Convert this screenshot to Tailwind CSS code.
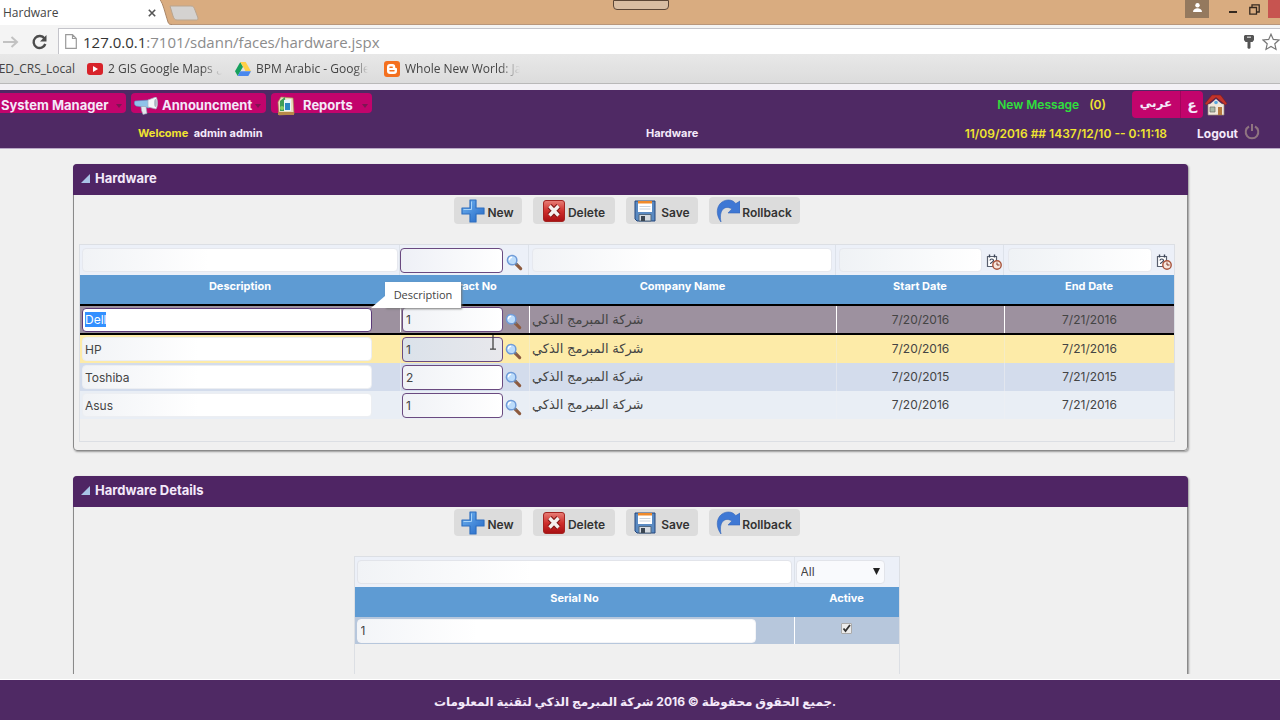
<!DOCTYPE html>
<html lang="en">
<head>
<meta charset="utf-8">
<title>Hardware</title>
<script src="https://cdn.jsdelivr.net/npm/@tailwindcss/browser@4"></script>
</head>
<body class="flex h-screen flex-col overflow-hidden bg-[#f0f0f0] font-[Inter,'DejaVu_Sans',sans-serif] text-xs text-[#444]">

<svg class="absolute size-0" aria-hidden="true">
  <linearGradient id="blue" x1="0" y1="0" x2="1" y2="1"><stop offset="0" stop-color="#6fb3f0"/><stop offset="1" stop-color="#2367c6"/></linearGradient>
  <linearGradient id="red" x1="0" y1="0" x2="0" y2="1"><stop offset="0" stop-color="#e88078"/><stop offset=".5" stop-color="#cf2f2c"/><stop offset="1" stop-color="#a80f12"/></linearGradient>
  <symbol id="plus" viewBox="0 0 24 24"><path d="M9 1h6v8h8v6h-8v8H9v-8H1V9h8z" fill="url(#blue)" stroke="#2e6fc0" stroke-width="1.2" stroke-linejoin="round"/><path d="M10.500 2.500v8H2.500" fill="none" stroke="#a5d2f8"/></symbol>
  <symbol id="del" viewBox="0 0 24 24"><rect x="1.500" y="1.500" width="21" height="21" rx="2.500" fill="url(#red)" stroke="#a32522"/><path d="M7.500 7l9 9.500M16.500 7l-9 9.500" stroke="#7d1715" stroke-width="5.500"/><path d="M7.500 7l9 9.500M16.500 7l-9 9.500" stroke="#f4f0ee" stroke-width="3.400"/></symbol>
  <symbol id="disk" viewBox="0 0 24 24"><path d="M2 2h20v20H4l-2-2z" fill="#5a8ac2" stroke="#24477c"/><path d="M5 2h14v11H5z" fill="#fff"/><path d="M5 2h14v2.500H5z" fill="#ef8a2b"/><path d="M6.500 7.500h11M6.500 10h11" stroke="#c9d2dc"/><path d="M6 15.500h12V22H6z" fill="#d5dae0" stroke="#52687f"/><path d="M8 17h4v5H8z" fill="#3b4652"/></symbol>
  <symbol id="roll" viewBox="0 0 24 24"><path d="M5 23C-3 12 3 1 12.500 1c3.500 0 5.500 1.500 7.300 3.600L24 2v12H12l3.800-4C9 5.500 2.500 11 5 23z" fill="#3f78d4" stroke="#3566b8" stroke-width=".6"/></symbol>
  <symbol id="lens" viewBox="0 0 18 18"><path d="M10.500 10.500l5 5" stroke="#8d5a3e" stroke-width="3.400" stroke-linecap="round"/><path d="M10 9.500l2 2" stroke="#6a7a8b" stroke-width="2"/><circle cx="6.500" cy="6.500" r="5" fill="#bcdcfb" stroke="#6f9bd8" stroke-width="1.600"/><path d="M3.500 6.500a3 3 0 0 1 3-3" fill="none" stroke="#fff" stroke-width="1.500"/></symbol>
  <symbol id="cal" viewBox="0 0 16 16"><path d="M1.500 2.500h9v10h-9z" fill="#fff" stroke="#59606f" stroke-width="1.200"/><path d="M3.500.5v3M8.500.5v3" stroke="#3b4458" stroke-width="1.400"/><path d="M4 6.500c0-2 3.500-2 3.500 0S4.500 8 4.500 10" fill="none" stroke="#3b4458" stroke-width="1.200"/><circle cx="11" cy="11" r="4.200" fill="#f7e6dc" stroke="#a8533a" stroke-width="1.400"/><path d="M11 8.500V11h2.500" fill="none" stroke="#7a3524"/></symbol>
  <symbol id="tri" viewBox="0 0 9 9"><path d="M9 0v9H0z" fill="#a9c3e6"/></symbol>
</svg>

<!-- Browser window -->
<div class="shrink-0 font-['Open_Sans',sans-serif]">
  <div class="relative flex h-[25px] border-b border-[#b8967a] bg-[#d9ac80]">
    <div class="flex h-[25px] w-40 items-center justify-between bg-white pl-[3px] pr-1 text-xs text-[#444]">
      <span>Hardware</span>
      <button aria-label="Close tab"><svg class="size-2" viewBox="0 0 8 8"><path d="M.8.8l6.400 6.400M7.200.8L.8 7.200" stroke="#555" stroke-width="1.600"/></svg></button>
    </div>
    <svg class="h-[25px] w-3" viewBox="0 0 12 25"><path d="M0 0c3 3 5 13 8 22 .5 2 2 3 4 3H0z" fill="#fff"/><path d="M0 0c3 3 5 13 8 22 .5 2 2 2.500 4 2.500" fill="none" stroke="#a98769"/></svg>
    <svg class="-ml-1 mt-[5px] h-4 w-8" viewBox="0 0 32 16"><path d="M2 1h21c3 0 3 2 4 4l3 8c0 2-1 2-2 2H9c-2 0-3-1-4-4z" fill="#d4d2d0" stroke="#b9a58f"/></svg>
    <div class="absolute left-1/2 top-0 ml-px h-[10px] w-14 -translate-x-1/2 rounded-b border border-[#5c4636] bg-[#d9bda2]"></div>
    <div class="ml-auto flex items-start">
      <button class="mr-5 flex h-[18px] w-6 items-center justify-center bg-[#94795e]" aria-label="Profile"><svg class="mb-1 size-[9px]" viewBox="0 0 9 9"><circle cx="4.500" cy="2.200" r="2.200" fill="#fff"/><path d="M0 9c0-5 9-5 9 0z" fill="#fff"/></svg></button>
      <button class="mr-3 h-[13px] w-2 border-b-2 border-[#35291f]" aria-label="Minimize"></button>
      <button class="mr-2 mt-1" aria-label="Restore"><svg class="size-[11px]" viewBox="0 0 11 11"><path d="M3 3V.8h7.200V8H8M.8 3.500H7.500v6.700H.8z" fill="none" stroke="#35291f" stroke-width="1.300"/></svg></button>
      <button class="h-[18px] w-3 bg-[#c75450]" aria-label="Close"></button>
    </div>
  </div>
  <div class="flex h-[29px] items-end bg-[#f4f4f4]">
    <svg class="mb-1 h-4 w-[58px]" viewBox="0 0 58 16"><path d="M3 8h14M11.500 3l5.500 5-5.500 5" fill="none" stroke="#c2c2c2" stroke-width="2"/><path d="M44.500 4.500a6 6 0 1 0 .8 5.500" fill="none" stroke="#4c4c4c" stroke-width="2.400"/><path d="M46.500 1v6.500H40z" fill="#4c4c4c"/></svg>
    <div class="flex h-[26px] flex-1 items-center border-l border-t border-[#c4c4ca] bg-white pl-[6px]">
      <svg class="h-[15px] w-3" viewBox="0 0 12 15"><path d="M.7.700h6.800l3.800 3.800v9.800H.7zM7.500.7v3.800h3.800" fill="#fff" stroke="#9a9a9a" stroke-width="1.200"/></svg>
      <div class="ml-[6px] flex-1 text-[15px] leading-5 text-[#8c8c8c]"><span class="text-[#333]">127.0.0.1</span>:7101/sdann/faces/hardware.jspx</div>
      <svg class="mr-2 h-[14px] w-[10px]" viewBox="0 0 10 14"><path d="M1 0h8l1 1v4L8.500 7H6.500v6L5 14l-1.500-1V7h-2L0 5V1z" fill="#555"/><path d="M3 2.200h4" stroke="#ddd" stroke-width="1.200"/></svg>
      <svg class="size-[18px]" viewBox="0 0 18 18"><path d="M9 1.200l2.300 5.200 5.700.6-4.200 3.800 1.200 5.600L9 13.500l-5 2.900 1.200-5.600L1 7l5.700-.6z" fill="#fff" stroke="#777" stroke-width="1.200"/></svg>
    </div>
  </div>
  <nav class="flex h-[30px] items-center border-b border-[#b9b9b9] bg-linear-to-b from-[#e8e8e8] to-[#dcdcdc] text-xs text-[#444]">
    <a href="#" class="flex w-[75px] shrink-0 justify-end overflow-hidden whitespace-nowrap">MED_CRS_Local</a>
    <a href="#" class="ml-3 flex w-[135px] items-center gap-[5px] overflow-hidden whitespace-nowrap [mask-image:linear-gradient(to_right,#000_85%,transparent)]">
      <svg class="h-3 w-4 shrink-0" viewBox="0 0 16 12"><rect width="16" height="12" rx="3" fill="#d8232a"/><path d="M6 3l5 3-5 3z" fill="#fff"/></svg>2 GIS Google Maps ل</a>
    <a href="#" class="ml-[13px] flex w-[133px] items-center gap-[5px] overflow-hidden whitespace-nowrap [mask-image:linear-gradient(to_right,#000_90%,transparent)]">
      <svg class="h-[14px] w-4 shrink-0" viewBox="0 0 16 14"><path d="M5.300 0L0 9.300 2.700 14 8 4.700z" fill="#17a05d"/><path d="M5.300 0h5.400L16 9.300h-5.400z" fill="#ffcf48"/><path d="M5.300 9.300H16L13.300 14H2.700z" fill="#4a88ee"/></svg>BPM Arabic - Google</a>
    <a href="#" class="ml-4 flex w-[136px] items-center gap-[5px] overflow-hidden whitespace-nowrap [mask-image:linear-gradient(to_right,#000_85%,transparent)]">
      <svg class="size-4 shrink-0" viewBox="0 0 16 16"><rect width="16" height="16" rx="3" fill="#f4701f"/><path d="M6 3h2.500A2.700 2.700 0 0 1 11.200 5.700c0 1 .3 1.300 1 1.300.5 0 .8.300.8.800V10a3 3 0 0 1-3 3H6a3 3 0 0 1-3-3V6a3 3 0 0 1 3-3z" fill="#fff"/><path d="M6 6.200h2.200M6 9.800h4" stroke="#f4701f" stroke-width="1.500" stroke-linecap="round"/></svg>Whole New World: Ja</a>
  </nav>
  <div class="h-[6px] bg-[#f3f1f5]"></div>
</div>

<!-- Application header -->
<header class="shrink-0 border-b border-[#b9a8c6] bg-[#4f2964] text-[11px] font-bold text-[#f4e9fa]">
  <div class="flex h-[29px] items-start">
    <nav class="flex items-start gap-[5px] pt-[3px] text-[13px]">
      <button class="flex h-5 w-[126px] items-center rounded-r bg-[#c2046c] pl-px pt-[6px]"><span>System Manager</span><span class="ml-auto mr-1 border-x-[3px] border-t-[4px] border-x-transparent border-t-[#7d1552]"></span></button>
      <button class="flex h-5 w-[135px] items-center rounded bg-[#c2046c] pl-[3px] pt-[6px]">
        <svg class="mr-1 h-[18px] w-6 shrink-0" viewBox="0 0 24 18"><path d="M1 4l14-1v8L2 9C0 8 0 5 1 4z" fill="#8fc3ea" stroke="#5b8fc0" stroke-width=".6"/><path d="M14 3l8-3c2 3 2 9 0 12l-8-2z" fill="#f3f6fa" stroke="#a4b2c4" stroke-width=".7"/><path d="M7 9.500h5l1 7-4 1-1.500-4z" fill="#e4e8ee" stroke="#93a0b4" stroke-width=".6"/><ellipse cx="21.500" cy="6" rx="1.300" ry="4" fill="#a9b3c2"/></svg>
        <span>Announcment</span><span class="ml-auto mr-[5px] border-x-[3px] border-t-[4px] border-x-transparent border-t-[#7d1552]"></span></button>
      <button class="flex h-5 w-[101px] items-center rounded bg-[#c2046c] pl-[6px] pt-[6px]">
        <svg class="mr-2 h-5 w-[18px] shrink-0" viewBox="0 0 18 20"><path d="M1 6l3-5 12 1 1 16-15 1z" fill="#eadfbe" stroke="#a88951" stroke-width=".7"/><path d="M3 5l5-4 1 14H3z" fill="#3f9d59"/><path d="M7 4l7-1v12H7z" fill="#e9f5fb"/><path d="M8 7h5v7H8z" fill="#2a86c4"/><circle cx="5" cy="12" r="2" fill="#8ccf66"/><path d="M1 16h16v3H1z" fill="#b98a48"/></svg>
        <span>Reports</span><span class="ml-auto mr-1 border-x-[3px] border-t-[4px] border-x-transparent border-t-[#7d1552]"></span></button>
    </nav>
    <div class="ml-auto flex items-start pr-[53px] pt-px">
      <a href="#" class="mt-[6px] flex gap-[10px] text-xs font-semibold"><span class="text-[#2fe03c]">New Message</span><span class="text-[#f0e430]">(0)</span></a>
      <a href="#" class="ml-[26px] flex h-[27px] w-12 items-center justify-center rounded-l-sm bg-[#c2046c] pb-1 text-xs font-bold">عربي</a>
      <a href="#" class="flex h-[27px] w-[23px] items-center justify-center rounded-r-sm border-l border-[#a3045c] bg-[#c2046c] text-sm">ع</a>
      <a href="#" aria-label="Home" class="ml-[2px] mt-[3px]"><svg class="h-[22px] w-[22px]" viewBox="0 0 22 22"><path d="M3 10h16v11H3z" fill="#f0e8dc" stroke="#9b8b78" stroke-width=".7"/><path d="M11 5l7 6v2H4v-2z" fill="#f0e8dc"/><path d="M7 1L0 9.500 1.500 11 11 3.500 20.500 11 22 9.500 15.500 1z" fill="#c3332c" stroke="#7c1f1b" stroke-width=".6"/><path d="M13 13h4v8h-4z" fill="#b5793f"/><path d="M5 13h5v5H5z" fill="#a9b9a8" stroke="#6b6b62" stroke-width=".7"/><circle cx="11" cy="8.500" r="1.800" fill="#57a6df"/></svg></a>
    </div>
  </div>
  <div class="grid h-[29px] grid-cols-[646px_1fr_auto] items-center">
    <p class="pl-[138px]"><span class="text-[#f0e430]">Welcome</span>&ensp;admin admin</p>
    <h1>Hardware</h1>
    <div class="flex items-center pr-5">
      <time class="text-xs font-semibold text-[#f0e430]">11/09/2016 ## 1437/12/10 -- 0:11:18</time>
      <a href="#" class="ml-[30px] flex items-center gap-[6px]"><span class="text-xs">Logout</span><svg class="mb-1 size-4" viewBox="0 0 16 16"><path d="M5 2.500a6.300 6.300 0 1 0 6 0M8 0v7" fill="none" stroke="#8f7480" stroke-width="2"/></svg></a>
    </div>
  </div>
</header>

<main class="mb-[5px] min-h-0 flex-1 overflow-hidden pl-[73px] pr-[92px] pt-[15px]">
  <!-- Hardware panel -->
  <section class="relative rounded border border-[#8a8a8a] shadow-[1px_1px_2px_#999]">
    <h2 class="-mx-px -mt-px flex h-[31px] items-center gap-[5px] rounded-t bg-[#4f2564] px-2 pb-[2px] text-[13px] font-bold text-[#f4e9fa]"><svg class="size-[9px]"><use href="#tri"/></svg>Hardware</h2>
    <div class="mr-2 mt-[2px] flex justify-center gap-[11px] font-semibold text-[#333]">
      <button class="flex h-[27px] w-[68px] items-center justify-center gap-[2px] rounded bg-[#dcdcdc]"><svg class="size-6"><use href="#plus"/></svg><span class="mt-1">New</span></button>
      <button class="flex h-[27px] w-[82px] items-center justify-center gap-[2px] rounded bg-[#dcdcdc]"><svg class="size-6"><use href="#del"/></svg><span class="mt-1">Delete</span></button>
      <button class="flex h-[27px] w-[72px] items-center justify-center gap-1 rounded bg-[#dcdcdc]"><svg class="size-6"><use href="#disk"/></svg><span class="mt-1">Save</span></button>
      <button class="flex h-[27px] w-[91px] items-center justify-center gap-[2px] rounded bg-[#dcdcdc]"><svg class="size-6"><use href="#roll"/></svg><span class="mt-1">Rollback</span></button>
    </div>
    <div class="mb-2 ml-[5px] mr-3 mt-5 border border-[#dcdfe4] pb-[22px]">
      <table class="w-full table-fixed border-separate border-spacing-0">
        <colgroup><col class="w-[320px]"><col class="w-[129px]"><col><col class="w-[168px]"><col class="w-[170px]"></colgroup>
        <thead>
          <tr class="bg-[#ecf0f8]">
            <td class="h-[30px] border-r border-[#dde2ea] p-0 pl-[2px]"><input aria-label="Filter description" class="block h-6 w-[316px] rounded border border-[#e6e8ee] bg-linear-to-r from-[#f1f3f6] to-white to-40%"></td>
            <td class="h-[30px] border-r border-[#dde2ea] p-0"><div class="flex items-center gap-[3px]"><input aria-label="Filter contract" class="block h-[25px] w-[103px] rounded border border-[#6a4a80] bg-linear-to-r from-[#eef0f6] to-white"><button aria-label="Search contract"><svg class="mt-1 size-[17px]"><use href="#lens"/></svg></button></div></td>
            <td class="h-[30px] border-r border-[#dde2ea] p-0 px-[3px]"><input aria-label="Filter company" class="block h-6 w-full rounded border border-[#e6e8ee] bg-linear-to-r from-[#f1f3f6] to-white to-40%"></td>
            <td class="h-[30px] border-r border-[#dde2ea] p-0 pl-[3px]"><div class="flex items-center gap-1"><input aria-label="Filter start date" class="block h-6 w-[143px] rounded border border-[#e6e8ee] bg-linear-to-r from-[#eff2f5] to-white"><button aria-label="Pick start date"><svg class="mt-1 size-4"><use href="#cal"/></svg></button></div></td>
            <td class="h-[30px] p-0 pl-1"><div class="flex items-center gap-1"><input aria-label="Filter end date" class="block h-6 w-[144px] rounded border border-[#e6e8ee] bg-linear-to-r from-[#eff2f5] to-white"><button aria-label="Pick end date"><svg class="mt-1 size-4"><use href="#cal"/></svg></button></div></td>
          </tr>
          <tr class="bg-[#5e9bd3] text-[11px] leading-4 text-white">
            <th class="h-[29px] p-0 pt-[3px] align-top">Description</th>
            <th class="h-[29px] p-0 pt-[3px] align-top">Contract No</th>
            <th class="h-[29px] p-0 pt-[3px] align-top">Company Name</th>
            <th class="h-[29px] p-0 pt-[3px] align-top">Start Date</th>
            <th class="h-[29px] p-0 pt-[3px] align-top">End Date</th>
          </tr>
        </thead>
        <tbody>
          <tr class="bg-[#9d919f]">
            <td class="h-[31px] border-y-2 border-black p-0 pl-[2px]"><input id="active-cell" aria-label="Description" value="Dell" class="block h-6 w-[290px] rounded border border-[#5b3a78] bg-white px-[2px] outline-none selection:bg-[#3390ff] selection:text-white"></td>
            <td class="h-[31px] border-y-2 border-black p-0"><div class="flex items-center gap-[2px] border-l border-white pl-px"><input aria-label="Contract No" value="1" class="block h-[25px] w-[101px] rounded border border-[#6a4a80] bg-linear-to-r from-[#f0f2f6] to-white px-[3px]"><button aria-label="Search contract"><svg class="mt-1 size-[17px]"><use href="#lens"/></svg></button></div></td>
            <td class="border-y-2 border-black p-0"><div class="flex h-[27px] items-center border-l border-white pl-[2px] text-[13px]">شركة المبرمج الذكي</div></td>
            <td class="border-y-2 border-black p-0"><div class="flex h-[27px] items-center justify-center border-l border-white">7/20/2016</div></td>
            <td class="border-y-2 border-black p-0"><div class="flex h-[27px] items-center justify-center border-l border-white">7/21/2016</div></td>
          </tr>
          <tr class="bg-[#fdeba8]">
            <td class="h-7 p-0 pl-[2px]"><input aria-label="Description" value="HP" class="block h-6 w-[290px] rounded border border-[#eceef2] bg-linear-to-r from-[#f1f3f6] to-white to-40% px-[2px]"></td>
            <td class="h-7 border-l border-[#efe6c8] p-0"><div class="flex items-center gap-[2px] pl-px"><input aria-label="Contract No" value="1" class="block h-[25px] w-[101px] rounded border border-[#6a4a80] bg-linear-to-r from-[#dbe2ea] to-[#e8e8ec] px-[3px]"><button aria-label="Search contract"><svg class="mt-1 size-[17px]"><use href="#lens"/></svg></button></div></td>
            <td class="border-l border-[#f6ecc4] p-0 pl-[2px] text-[13px]">شركة المبرمج الذكي</td>
            <td class="border-l border-[#f6ecc4] p-0 text-center">7/20/2016</td>
            <td class="border-l border-[#f6ecc4] p-0 text-center">7/21/2016</td>
          </tr>
          <tr class="bg-[#d3dcec]">
            <td class="h-7 p-0 pl-[2px]"><input aria-label="Description" value="Toshiba" class="block h-6 w-[290px] rounded border border-[#eceef2] bg-linear-to-r from-[#f1f3f6] to-white to-40% px-[2px]"></td>
            <td class="h-7 border-l border-[#e2e6ee] p-0"><div class="flex items-center gap-[2px] pl-px"><input aria-label="Contract No" value="2" class="block h-[25px] w-[101px] rounded border border-[#6a4a80] bg-linear-to-r from-[#f0f2f6] to-white px-[3px]"><button aria-label="Search contract"><svg class="mt-1 size-[17px]"><use href="#lens"/></svg></button></div></td>
            <td class="border-l border-[#e2e6ee] p-0 pl-[2px] text-[13px]">شركة المبرمج الذكي</td>
            <td class="border-l border-[#e2e6ee] p-0 text-center">7/20/2015</td>
            <td class="border-l border-[#e2e6ee] p-0 text-center">7/21/2015</td>
          </tr>
          <tr class="bg-[#e9eef5]">
            <td class="h-7 p-0 pl-[2px]"><input aria-label="Description" value="Asus" class="block h-6 w-[290px] rounded border border-[#eceef2] bg-linear-to-r from-[#f1f3f6] to-white to-40% px-[2px]"></td>
            <td class="h-7 border-l border-[#eceff4] p-0"><div class="flex items-center gap-[2px] pl-px"><input aria-label="Contract No" value="1" class="block h-[25px] w-[101px] rounded border border-[#6a4a80] bg-linear-to-r from-[#f0f2f6] to-white px-[3px]"><button aria-label="Search contract"><svg class="mt-1 size-[17px]"><use href="#lens"/></svg></button></div></td>
            <td class="border-l border-[#eceff4] p-0 pl-[2px] text-[13px]">شركة المبرمج الذكي</td>
            <td class="border-l border-[#eceff4] p-0 text-center">7/20/2016</td>
            <td class="border-l border-[#eceff4] p-0 text-center">7/21/2016</td>
          </tr>
        </tbody>
      </table>
    </div>
    <!-- Tooltip of the active cell -->
    <div role="tooltip" class="absolute left-[311px] top-[117px] flex h-[26px] w-[76px] items-center justify-center bg-white font-['Open_Sans',sans-serif] text-[11px] text-[#444] shadow-[1px_1px_2px_#777]">Description
      <svg class="absolute -left-[14px] bottom-0 h-3 w-[14px]" viewBox="0 0 14 12"><path d="M14 0v12H7L0 12z" fill="#fff"/></svg>
    </div>
    <!-- Text pointer -->
    <svg class="absolute left-[415px] top-[170px] h-[15px] w-2" viewBox="0 0 8 15"><path d="M4 0v14M1 14.200h6" stroke="#444" stroke-width="1.300"/></svg>
  </section>

  <!-- Hardware details panel -->
  <section class="mt-[25px] rounded-t border border-[#8a8a8a] pb-10 shadow-[1px_1px_2px_#999]">
    <h2 class="-mx-px -mt-px flex h-[31px] items-center gap-[5px] rounded-t bg-[#4f2564] px-2 pb-[2px] text-[13px] font-bold text-[#f4e9fa]"><svg class="size-[9px]"><use href="#tri"/></svg>Hardware Details</h2>
    <div class="mr-2 mt-[2px] flex justify-center gap-[11px] font-semibold text-[#333]">
      <button class="flex h-[27px] w-[68px] items-center justify-center gap-[2px] rounded bg-[#dcdcdc]"><svg class="size-6"><use href="#plus"/></svg><span class="mt-1">New</span></button>
      <button class="flex h-[27px] w-[82px] items-center justify-center gap-[2px] rounded bg-[#dcdcdc]"><svg class="size-6"><use href="#del"/></svg><span class="mt-1">Delete</span></button>
      <button class="flex h-[27px] w-[72px] items-center justify-center gap-1 rounded bg-[#dcdcdc]"><svg class="size-6"><use href="#disk"/></svg><span class="mt-1">Save</span></button>
      <button class="flex h-[27px] w-[91px] items-center justify-center gap-[2px] rounded bg-[#dcdcdc]"><svg class="size-6"><use href="#roll"/></svg><span class="mt-1">Rollback</span></button>
    </div>
    <div class="mr-2 mt-5 flex justify-center">
      <div class="w-[546px] border border-[#dcdfe4] pb-12">
        <table class="w-full table-fixed border-separate border-spacing-0">
          <colgroup><col><col class="w-[104px]"></colgroup>
          <thead>
            <tr class="bg-[#ecf0f8]">
              <td class="h-[30px] border-r border-[#dde2ea] p-0 px-[2px]"><input aria-label="Filter serial" class="block h-6 w-full rounded border border-[#e2e4ea] bg-linear-to-r from-[#f1f3f6] to-white to-40%"></td>
              <td class="h-[30px] p-0 pl-px"><div class="relative w-[89px]"><select aria-label="Filter active" class="block h-6 w-full appearance-none rounded border border-[#e2e4ea] bg-[#f9fafd] px-1 text-xs"><option>All</option></select><svg class="pointer-events-none absolute right-[5px] top-2 h-[7px] w-[7px]" viewBox="0 0 7 7"><path d="M0 0h7L3.500 7z" fill="#222"/></svg></div></td>
            </tr>
            <tr class="bg-[#5e9bd3] text-[11px] leading-4 text-white">
              <th class="h-[30px] p-0 pt-[3px] align-top">Serial No</th>
              <th class="h-[30px] p-0 pt-[3px] align-top">Active</th>
            </tr>
          </thead>
          <tbody>
            <tr class="bg-[#b7c7dc]">
              <td class="h-[27px] border-r border-white p-0 pl-[2px]"><input aria-label="Serial No" value="1" class="block h-6 w-[399px] rounded border border-[#f3f4f7] bg-linear-to-r from-[#f3f5f8] to-white to-30% px-[3px]"></td>
              <td class="h-[27px] p-0"><label class="relative mx-auto mb-1 block size-[11px]"><input type="checkbox" checked aria-label="Active" class="block size-[11px] appearance-none rounded-[1px] border border-[#aaa] bg-[#ececec]"><svg class="pointer-events-none absolute left-0 top-0 size-[11px]" viewBox="0 0 11 11"><path d="M2.500 5.500l2 2.500L9 2" fill="none" stroke="#333" stroke-width="1.800"/></svg></label></td>
            </tr>
          </tbody>
        </table>
      </div>
    </div>
  </section>
</main>

<footer class="flex h-[41px] shrink-0 items-center justify-center border-t border-white bg-[#4f2964] pb-px pr-[10px] pt-1 text-xs font-bold text-[#f4e9fa]">جميع الحقوق محفوظة © 2016 شركة المبرمج الذكي لتقنية المعلومات.</footer>

<script>
  const cell = document.getElementById('active-cell');
  cell.focus({ preventScroll: true });
  cell.select();
</script>
</body>
</html>
